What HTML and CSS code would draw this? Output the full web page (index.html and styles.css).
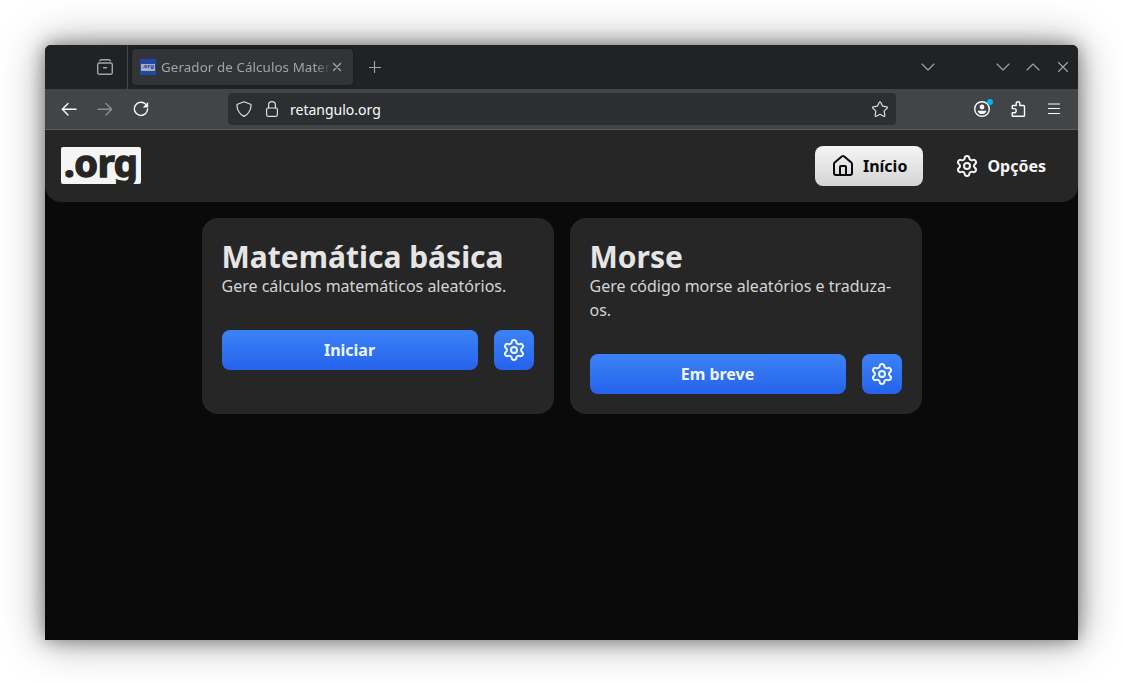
FILE: index.html
```html
<!DOCTYPE html>
<html lang="pt-BR">
<head>
<meta charset="utf-8">
<title>Gerador de Cálculos Matemáticos</title>
<link rel="stylesheet" href="styles.css">
</head>
<body>
<svg class="defs" aria-hidden="true">
  <symbol id="gear" viewBox="0 0 24 24"><path d="M9.671 4.136a2.34 2.34 0 0 1 4.659 0 2.34 2.34 0 0 0 3.319 1.915 2.34 2.34 0 0 1 2.33 4.033 2.34 2.34 0 0 0 0 3.831 2.34 2.34 0 0 1-2.33 4.033 2.34 2.34 0 0 0-3.319 1.915 2.34 2.34 0 0 1-4.659 0 2.34 2.34 0 0 0-3.32-1.915 2.34 2.34 0 0 1-2.33-4.033 2.34 2.34 0 0 0 0-3.831A2.34 2.34 0 0 1 6.35 6.051a2.34 2.34 0 0 0 3.319-1.915"/><circle cx="12" cy="12" r="3"/></symbol>
</svg>
<div class="window">
  <div class="titlebar">
    <div class="recent"><svg class="ico" viewBox="0 0 16 16"><path d="M2.600 1.900Q3 .8 4.200.8h7.600q1.200 0 1.600 1.100M2.400 4h11.200a1.700 1.700 0 0 1 1.700 1.700v7.900a1.700 1.700 0 0 1-1.700 1.700H2.400a1.700 1.700 0 0 1-1.700-1.700V5.700A1.700 1.700 0 0 1 2.400 4zM6.500 8.700h3"/></svg></div>
    <div class="tab">
      <span class="favicon"><span>.org</span></span>
      <span class="tab-title">Gerador de Cálculos Matem</span>
      <svg class="tab-close" viewBox="0 0 10 10"><path d="M1.500 1.500l7 7M8.500 1.500l-7 7"/></svg>
    </div>
    <svg class="plus" viewBox="0 0 12 12"><path d="M5.500 0v12M0 6.500h12"/></svg>
    <div class="controls">
      <svg class="chev all-tabs" viewBox="0 0 14 14"><path d="M1 4l6 6 6-6"/></svg>
      <svg class="chev" viewBox="0 0 14 14"><path d="M1 4l6 6 6-6"/></svg>
      <svg class="chev" viewBox="0 0 14 14"><path d="M1 10l6-6 6 6"/></svg>
      <svg class="chev" viewBox="0 0 14 14"><path d="M2.500 2.500l9 9M11.500 2.500l-9 9"/></svg>
    </div>
  </div>
  <div class="toolbar">
    <div class="nav-buttons">
      <svg class="ico" viewBox="0 0 16 16"><path d="M15 8.300H1.500M7 2.600L1.300 8.300 7 14"/></svg>
      <svg class="ico dim" viewBox="0 0 16 16"><path d="M1 8.300h13.500M9 2.600l5.700 5.700L9 14"/></svg>
      <svg class="ico" viewBox="0 0 16 16"><path d="M12.800 3.300A6.600 6.600 0 1 0 14.600 8"/><path class="fill" d="M15.200 1v5a.6.6 0 0 1-.6.6H9.700z"/></svg>
    </div>
    <div class="urlbar">
      <svg class="ico thin" viewBox="0 0 16 16"><path d="M8 .7L14.500 3.200a1 1 0 0 1 .6 1C14.800 9 12.500 13 8 15.400 3.500 13 1.200 9 .9 4.200a1 1 0 0 1 .6-1z"/></svg>
      <svg class="ico thin" viewBox="0 0 16 16"><rect x="2.600" y="7" width="10.800" height="8.300" rx="1.500"/><path d="M4.600 7V4a3.400 3.400 0 0 1 6.800 0v3"/></svg>
      <span class="url">retangulo.org</span>
      <svg class="ico thin" viewBox="0 0 16 16"><path d="M7.300 1.200a.8.8 0 0 1 1.400 0l1.900 4 4.200.6a.8.8 0 0 1 .4 1.300l-3.100 3 .8 4.300a.8.8 0 0 1-1.200.9L8 13.300l-3.700 2a.8.8 0 0 1-1.200-.9l.8-4.300-3.100-3a.8.8 0 0 1 .4-1.300l4.200-.6z"/></svg>
    </div>
    <div class="tools">
      <span class="account">
        <svg class="ico" viewBox="0 0 16 16"><circle cx="8" cy="8" r="7.300"/><circle class="fill" cx="8" cy="6" r="2.400"/><path class="fill" d="M3.700 9.700h8.600c0 2-2 3.400-4.300 3.400S3.700 11.700 3.700 9.700z"/></svg>
        <span class="dot"></span>
      </span>
      <svg class="ico" viewBox="0 0 16 16"><path d="M2.200 7.600V5.300a.8.8 0 0 1 .8-.8h3.200V2.500a1.800 1.800 0 0 1 3.600 0v2h3.900a.8.8 0 0 1 .8.8v9.200a.8.8 0 0 1-.8.8H3a.8.8 0 0 1-.8-.8v-2.700h1.900a2.100 2.100 0 0 0 0-4.200z"/></svg>
      <svg class="ico thin" viewBox="0 0 16 16"><path d="M2.500 3h11M2.500 7.500h11M2.500 12.500h11"/></svg>
    </div>
  </div>
  <header class="header">
    <div class="logo">.org</div>
    <nav class="nav">
      <a class="link active"><svg class="icon" viewBox="0 0 24 24"><path d="M15 21v-8a1 1 0 0 0-1-1h-4a1 1 0 0 0-1 1v8"/><path d="M3 10a2 2 0 0 1 .709-1.528l7-5.999a2 2 0 0 1 2.582 0l7 5.999A2 2 0 0 1 21 10v9a2 2 0 0 1-2 2H5a2 2 0 0 1-2-2z"/></svg>Início</a>
      <a class="link"><svg class="icon"><use href="#gear"/></svg>Opções</a>
    </nav>
  </header>
  <main class="cards">
    <section class="card">
      <h2>Matemática básica</h2>
      <p>Gere cálculos matemáticos aleatórios.</p>
      <div class="actions"><button class="btn grow">Iniciar</button><button class="btn square"><svg class="icon"><use href="#gear"/></svg></button></div>
    </section>
    <section class="card">
      <h2>Morse</h2>
      <p>Gere código morse aleatórios e traduza-os.</p>
      <div class="actions"><button class="btn grow">Em breve</button><button class="btn square"><svg class="icon"><use href="#gear"/></svg></button></div>
    </section>
  </main>
</div>
</body>
</html>
```
FILE: styles.css
```css
* { box-sizing: border-box; }
body {
  margin: 0;
  padding: 45px;
  height: 685px;
  overflow: hidden;
  background: #fff;
  font-family: "Noto Sans", sans-serif;
  font-size: 16px;
  line-height: 24px;
}
svg { display: block; flex: none; fill: none; stroke: currentColor; stroke-linecap: round; stroke-linejoin: round; }
.defs { display: none; }
.window {
  width: 1033px;
  height: 595px;
  background: #0a0a0a;
  border-radius: 6px 6px 0 0;
  box-shadow: 0 0 44px rgba(0, 0, 0, .4), 0 0 18px rgba(0, 0, 0, .4);
}
.titlebar {
  display: flex;
  align-items: center;
  height: 44px;
  background: #202326;
  border-radius: 6px 6px 0 0;
  color: #a2a4a6;
}
.ico { width: 16px; height: 16px; stroke-width: 1.4; }
.thin { stroke-width: 1.2; }
.fill { fill: currentColor; stroke: none; }
.recent { width: 83px; height: 44px; padding: 14px 0 0 52px; border-right: 1px solid #45484b; }
.tab {
  display: flex;
  align-items: center;
  width: 221px;
  height: 36px;
  margin-left: 4px;
  padding: 0 11px 0 8px;
  border-radius: 4px;
  background: #323538;
  box-shadow: 0 0 2px rgba(0, 0, 0, .5);
}
.favicon { display: flex; align-items: center; width: 16px; height: 16px; background: #2148a4; }
.favicon span { width: 14px; height: 7px; margin: 0 1px; background: #a9afbd; color: #2148a4; font-size: 6px; line-height: 5px; font-weight: 800; text-align: center; }
.tab-title {
  flex: 1;
  min-width: 0;
  margin: 0 1px 0 5px;
  overflow: hidden;
  white-space: nowrap;
  font-size: 13.33px;
  letter-spacing: .1px;
  -webkit-mask-image: linear-gradient(to left, transparent, #000 16px);
  mask-image: linear-gradient(to left, transparent, #000 16px);
}
.tab-close { width: 10px; height: 10px; stroke-width: 1.4; }
.plus { width: 12px; height: 12px; margin-left: 16px; stroke-width: 1.1; }
.controls { display: flex; gap: 16px; margin-left: auto; padding-right: 8px; }
.chev { width: 14px; height: 14px; stroke-width: 1.1; }
.all-tabs { margin-right: 45px; }
.toolbar {
  display: flex;
  align-items: center;
  height: 41px;
  background: #414548;
  border-bottom: 1px solid #5a5d60;
  color: #fbfbfe;
}
.nav-buttons { display: flex; gap: 20px; width: 183px; padding-left: 16px; }
.dim { opacity: .4; }
.urlbar {
  display: flex;
  align-items: center;
  gap: 12px;
  width: 668px;
  height: 32px;
  padding: 0 8px;
  border-radius: 4px;
  background: #2d2e32;
}
.urlbar .ico { color: #dddde0; }
.url { flex: 1; margin-left: -2px; padding-top: 2px; font-size: 14px; line-height: 20px; }
.tools { display: flex; gap: 20px; margin-left: auto; padding-right: 16px; }
.account { position: relative; }
.dot { position: absolute; top: -2px; right: -3px; width: 6px; height: 6px; border-radius: 50%; background: #00b3f4; }
.header {
  display: flex;
  align-items: center;
  justify-content: space-between;
  height: 72px;
  padding: 0 16px;
  border-radius: 0 0 16px 16px;
  background: #262626;
}
.logo {
  width: 80px;
  height: 37px;
  margin-bottom: 2px;
  padding-left: 3px;
  overflow: hidden;
  border-radius: 2px;
  background: #f5f5f5;
  color: #262626;
  font-size: 38px;
  line-height: 31px;
  font-weight: 700;
  letter-spacing: -.4px;
  -webkit-text-stroke: 1.500px #262626;
}
.nav { display: flex; gap: 16px; }
.link { display: flex; align-items: center; gap: 8px; height: 40px; padding: 0 16px; border-radius: 8px; color: #f5f5f5; font-weight: 700; }
.active { background: linear-gradient(#f5f5f5, #d4d4d4); color: #0a0a0a; }
.icon { width: 24px; height: 24px; stroke-width: 2; }
.cards { display: flex; justify-content: center; gap: 16px; padding: 16px; }
.card { width: 352px; height: 196px; padding: 20px; border-radius: 16px; background: #262626; }
h2 { margin: 0; padding-top: 1px; color: #e5e5e5; font-size: 30px; line-height: 35px; font-weight: 700; }
p { margin: 0; color: #d4d4d4; }
.actions { display: flex; gap: 16px; margin-top: 32px; }
.btn {
  display: flex;
  align-items: center;
  justify-content: center;
  height: 40px;
  padding: 0;
  border: 0;
  border-radius: 8px;
  background: linear-gradient(#3b82f6, #2563eb);
  color: #eff6ff;
  font: 700 16px/24px "Noto Sans", sans-serif;
}
.grow { flex: 1; }
.square { width: 40px; }
```
